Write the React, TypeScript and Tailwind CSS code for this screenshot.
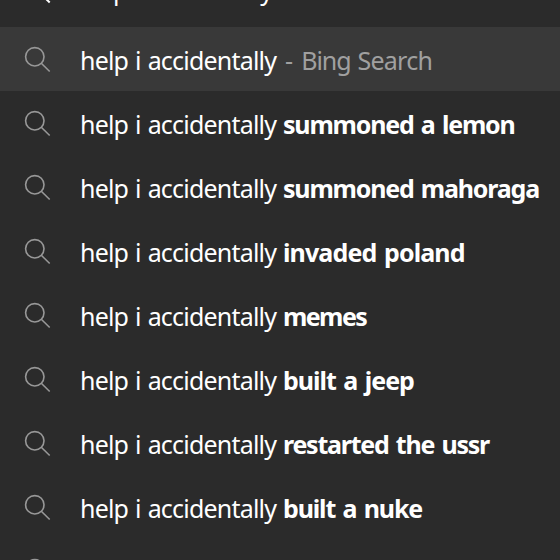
import React from "react";

const QUERY = "help i accidentally";

const suggestions = [
  { text: "summoned a lemon", style: "tracking-[-1.2px]" },
  { text: "summoned mahoraga", style: "tracking-[-1.2px]" },
  { text: "invaded poland", style: "tracking-[-0.88px]" },
  { text: "memes", style: "tracking-[-1.6px]" },
  { text: "built a jeep", style: "tracking-[-1px]" },
  { text: "restarted the ussr", style: "tracking-[-1.24px]" },
  { text: "built a nuke", style: "tracking-[-1.14px]" },
];

const SearchIcon = ({ className }: { className: string }) => (
  <svg
    className={className}
    width="28"
    height="28"
    viewBox="0 0 28 28"
    fill="none"
    stroke="currentColor"
  >
    <circle cx="10.8" cy="10.8" r="9.2" />
    <path d="M17.3 17.3 L25.7 25.5" />
  </svg>
);

const Row = ({
  active = false,
  children,
}: {
  active?: boolean;
  children: React.ReactNode;
}) => (
  <li
    className={`flex h-16 shrink-0 items-start pl-6 ${
      active ? "bg-[#393939]" : ""
    }`}
  >
    <SearchIcon className="mt-[19px] shrink-0 stroke-[1.6] text-[#989898]" />
    <div className="ml-7 flex pt-4 text-[25px] leading-[34px] whitespace-pre text-white">
      {children}
    </div>
  </li>
);

const Query = () => (
  <span className="w-[203px] shrink-0 tracking-[-0.8px] [word-spacing:1.2px]">
    {QUERY}
  </span>
);

export default function App() {
  return (
    <div className="flex h-[560px] w-[560px] flex-col overflow-hidden bg-[#2b2b2b] font-['Noto_Sans','Open_Sans',sans-serif]">
      {/* Address bar, scrolled mostly out of view */}
      <div className="flex h-[27px] shrink-0 items-start overflow-hidden pl-6">
        <SearchIcon className="-mt-[23px] shrink-0 stroke-2 text-white" />
        <span className="-mt-[27px] ml-7 text-[25px] leading-[34px] tracking-[-1px] [word-spacing:1px] whitespace-pre text-white">
          {QUERY}
        </span>
      </div>

      <ul className="flex flex-col">
        <Row active>
          <Query />
          <span className="ml-0.5 flex tracking-[-0.75px] text-[#a0a0a0]">
            <span>-</span>
            <span className="ml-[9px] tracking-[-1.1px]">Bing</span>
            <span className="ml-[7px]">Search</span>
          </span>
        </Row>
        {suggestions.map((item) => (
          <Row key={item.text}>
            <Query />
            <b className={`font-bold [word-spacing:2px] ${item.style}`}>
              {item.text}
            </b>
          </Row>
        ))}
        <Row>{null}</Row>
      </ul>
    </div>
  );
}
